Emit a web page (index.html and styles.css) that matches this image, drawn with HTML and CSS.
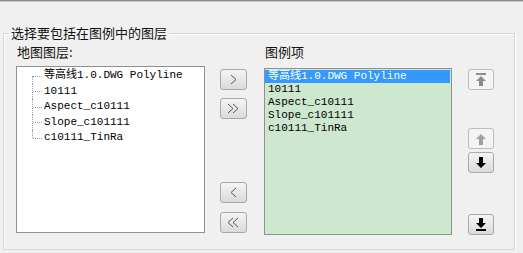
FILE: index.html
```html
<!DOCTYPE html>
<html lang="zh">
<head>
    <meta charset="UTF-8">
    <title>图例项</title>
    <link rel="stylesheet" href="styles.css">
</head>
<body>
    <div class="topline"></div>
    <fieldset class="group">
        <legend>选择要包括在图例中的图层</legend>
        <div class="panes">
            <div class="pane">
                <div class="caption">地图图层:</div>
                <ul class="tree">
                    <li>等高线1.0.DWG Polyline</li>
                    <li>10111</li>
                    <li>Aspect_c10111</li>
                    <li>Slope_c101111</li>
                    <li>c10111_TinRa</li>
                </ul>
            </div>
            <div class="moves">
                <div class="move-group">
                    <button class="btn" title="添加">
                        <svg width="9" height="11" viewBox="0 0 9 11"><polyline points="2,1 7,5.5 2,10" fill="none" stroke="#555" stroke-width="1"/></svg>
                    </button>
                    <button class="btn" title="全部添加">
                        <svg width="13" height="11" viewBox="0 0 13 11"><polyline points="1,1 6,5.5 1,10" fill="none" stroke="#555" stroke-width="1"/><polyline points="6,1 11,5.5 6,10" fill="none" stroke="#555" stroke-width="1"/></svg>
                    </button>
                </div>
                <div class="move-group low">
                    <button class="btn" title="移除">
                        <svg width="9" height="11" viewBox="0 0 9 11"><polyline points="7,1 2,5.5 7,10" fill="none" stroke="#555" stroke-width="1"/></svg>
                    </button>
                    <button class="btn" title="全部移除">
                        <svg width="13" height="11" viewBox="0 0 13 11"><polyline points="6,1 1,5.5 6,10" fill="none" stroke="#555" stroke-width="1"/><polyline points="11,1 6,5.5 11,10" fill="none" stroke="#555" stroke-width="1"/></svg>
                    </button>
                </div>
            </div>
            <div class="pane pane-dst">
                <div class="caption">图例项</div>
                <ul class="items">
                    <li class="selected">等高线1.0.DWG Polyline</li>
                    <li>10111</li>
                    <li>Aspect_c10111</li>
                    <li>Slope_c101111</li>
                    <li>c10111_TinRa</li>
                </ul>
            </div>
            <div class="order">
                <button class="btn small disabled" title="置顶">
                    <svg width="12" height="13" viewBox="0 0 12 13"><rect x="1" y="0" width="10" height="2" fill="#8c8c8c"/><polygon points="6,3 11,8 8,8 8,13 4,13 4,8 1,8" fill="#8c8c8c"/></svg>
                </button>
                <button class="btn small disabled up" title="上移">
                    <svg width="12" height="12" viewBox="0 0 12 12"><polygon points="6,1 11,6 8,6 8,12 4,12 4,6 1,6" fill="#a0a0a0"/></svg>
                </button>
                <button class="btn small down" title="下移">
                    <svg width="12" height="12" viewBox="0 0 12 12"><polygon points="6,11 11,6 8,6 8,0 4,0 4,6 1,6" fill="#000"/></svg>
                </button>
                <button class="btn small bottom" title="置底">
                    <svg width="12" height="13" viewBox="0 0 12 13"><polygon points="6,10 11,5 8,5 8,0 4,0 4,5 1,5" fill="#000"/><rect x="1" y="11" width="10" height="2" fill="#000"/></svg>
                </button>
            </div>
        </div>
    </fieldset>
</body>
</html>
```

FILE: styles.css
```css
body {
    margin: 0;
    background-color: #f0f0f0;
    font-family: "Noto Sans CJK SC", "Noto Sans", sans-serif;
    font-size: 13px;
    color: #111;
}
.topline {
    height: 1px;
    background-color: #8a8a8a;
    border-bottom: 1px solid #c4c4c4;
}
.group {
    box-sizing: border-box;
    width: 512px;
    margin: 23px 0 0 3px;
    padding: 3px 12px 14px 12px;
    border: 1px solid #d6d6d6;
    box-shadow: inset 1px 1px 0 #fff, 1px 1px 0 #fff;
}
.group legend {
    margin-left: -7px;
    padding: 0 2px;
    line-height: 16px;
}
.panes {
    display: flex;
    align-items: flex-start;
}
.caption {
    line-height: 16px;
    padding-left: 1px;
    margin-bottom: 6px;
}
.pane-dst .caption {
    margin-bottom: 8px;
}
.tree, .items {
    list-style: none;
    margin: 0;
    box-sizing: border-box;
    height: 167px;
    border: 1px solid #8f9090;
    font-family: "Liberation Mono", "Noto Sans CJK SC", monospace;
    font-size: 11px;
    color: #000;
    overflow: hidden;
    white-space: nowrap;
}
.tree {
    width: 189px;
    padding: 1px 0 0 0;
    background: #fff;
}
.tree li {
    position: relative;
    height: 15.5px;
    line-height: 15.5px;
    padding-left: 27px;
}
.tree li::before {
    content: '';
    position: absolute;
    left: 15px;
    top: 0;
    bottom: 0;
    border-left: 1px dotted #a0a0a0;
}
.tree li:first-child::before {
    top: 50%;
}
.tree li:last-child::before {
    bottom: 50%;
}
.tree li::after {
    content: '';
    position: absolute;
    left: 16px;
    top: 50%;
    width: 9px;
    border-top: 1px dotted #a0a0a0;
}
.moves {
    display: flex;
    flex-direction: column;
    justify-content: space-between;
    height: 164px;
    margin: 25px 17px 0 15px;
}
.move-group {
    display: flex;
    flex-direction: column;
    gap: 8px;
}
.move-group.low {
    gap: 9px;
}
.btn {
    display: flex;
    align-items: center;
    justify-content: center;
    box-sizing: border-box;
    width: 27px;
    height: 21px;
    padding: 0;
    border: 1px solid #a9a9a9;
    border-radius: 3px;
    background: linear-gradient(#f4f4f4, #e8e8e8 50%, #dadada);
    cursor: pointer;
}
.btn.small {
    width: 26px;
}
.btn.disabled {
    border-color: #bdbdbd;
    background: #f4f4f4;
    cursor: default;
}
.items {
    width: 188px;
    padding: 1px 0 0 0;
    background: #cee7cf;
}
.items li {
    height: 13px;
    line-height: 13px;
    padding-left: 3px;
}
.items li.selected {
    background: #3399ff;
    color: #fff;
    margin-right: 1px;
}
.order {
    display: flex;
    flex-direction: column;
    margin: 25px 0 0 16px;
}
.order .up {
    margin-top: 38px;
}
.order .down {
    margin-top: 3px;
}
.order .bottom {
    margin-top: 41px;
}
```
